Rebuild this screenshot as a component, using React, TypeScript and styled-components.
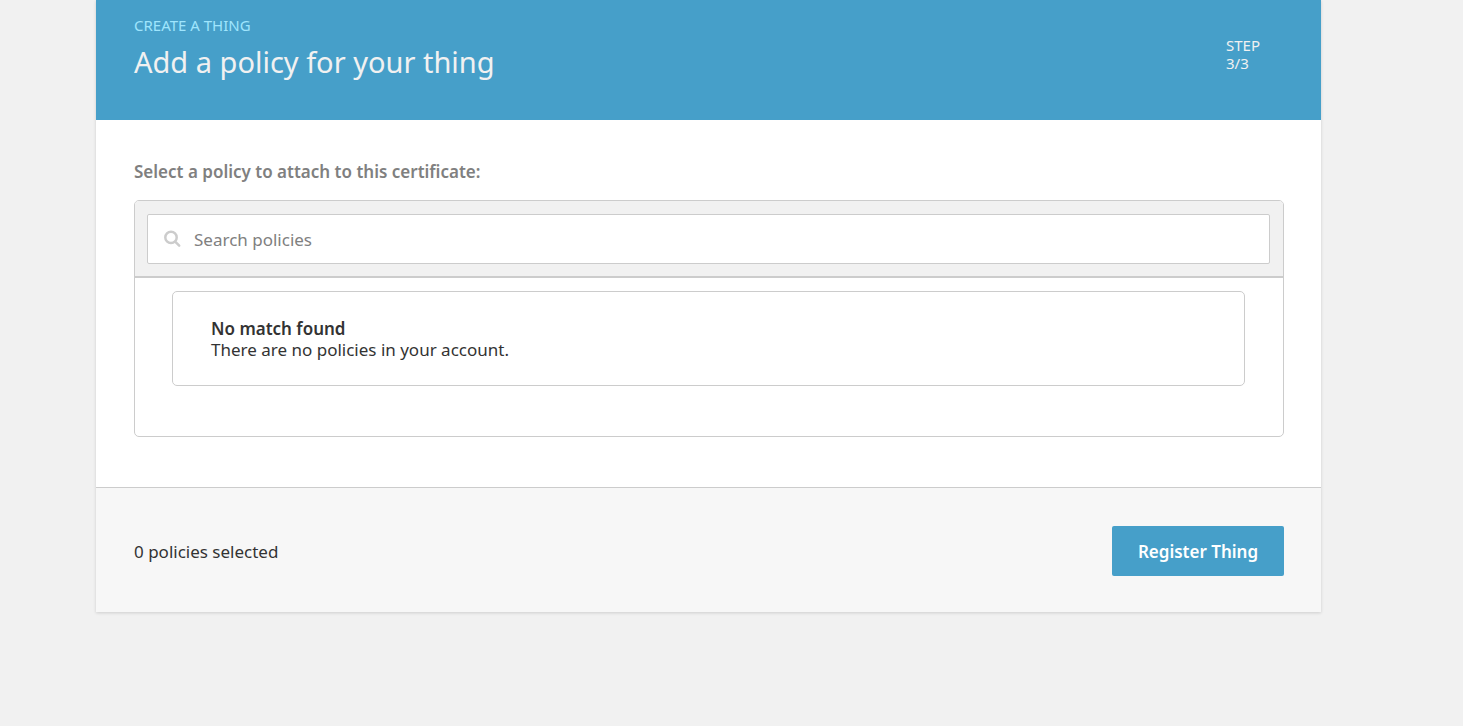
import React, { useState } from "react";
import styled, { createGlobalStyle } from "styled-components";

const GlobalStyle = createGlobalStyle`
  *, *::before, *::after { box-sizing: border-box; }
  body {
    margin: 0;
    background: #f1f1f1;
    color: #333;
    font-family: "Noto Sans", sans-serif;
    font-size: 17px;
    line-height: 21px;
  }
`;

const Page = styled.div`
  padding: 0 142px 114px 96px;
`;

const Card = styled.main`
  background: #fff;
  box-shadow: 0 1px 3px rgba(0, 0, 0, 0.15);
`;

const Header = styled.header`
  display: flex;
  justify-content: space-between;
  padding: 16px 60px 38px 38px;
  background: #469fc9;
  color: #f1f1f1;
`;

const Eyebrow = styled.p`
  margin: 0;
  color: #9fe5fd;
  font-size: 15px;
  line-height: 18px;
  text-transform: uppercase;
`;

const Title = styled.h1`
  margin: 8px 0 0;
  font-size: 29px;
  font-weight: 400;
  line-height: 40px;
`;

const Step = styled.div`
  width: 35px;
  padding-top: 20px;
  font-size: 15px;
  line-height: 18px;
`;

const Body = styled.section`
  padding: 41px 37px 50px 38px;
`;

const Label = styled.label`
  display: block;
  margin-bottom: 17px;
  color: #808080;
  font-weight: 600;
  line-height: 22px;
`;

const Panel = styled.div`
  overflow: hidden;
  border: 1px solid #ccc;
  border-radius: 5px;
`;

const Toolbar = styled.div`
  padding: 13px 13px 12px 12px;
  border-bottom: 2px solid #ccc;
  background: #f1f1f1;
`;

const SearchBox = styled.div`
  display: flex;
  align-items: center;
  gap: 12px;
  height: 50px;
  padding: 0 16px;
  border: 1px solid #ccc;
  border-radius: 2px;
  background: #fff;
`;

const SearchInput = styled.input`
  flex: 1;
  min-width: 0;
  padding: 0;
  border: 0;
  outline: 0;
  background: transparent;
  color: #333;
  font: inherit;

  &::placeholder {
    color: #808080;
    opacity: 1;
  }
`;

const Results = styled.div`
  padding: 13px 38px 50px 37px;
`;

const Notice = styled.div`
  padding: 26px 38px 25px;
  border: 1px solid #ccc;
  border-radius: 5px;
`;

const NoticeText = styled.p<{ $strong?: boolean }>`
  margin: 0;
  font-weight: ${(p) => (p.$strong ? 600 : 400)};
`;

const Footer = styled.footer`
  display: flex;
  align-items: center;
  justify-content: space-between;
  padding: 38px 37px 36px 38px;
  border-top: 1px solid #ccc;
  background: #f7f7f7;
`;

const PrimaryButton = styled.button`
  height: 50px;
  min-width: 172px;
  padding: 0 24px;
  border: 0;
  border-radius: 2px;
  background: #469fc9;
  color: #fff;
  font: inherit;
  font-weight: 600;
  cursor: pointer;
`;

function SearchIcon() {
  return (
    <svg width="18" height="18" viewBox="0 0 18 18" fill="none" stroke="#ccc" aria-hidden="true">
      <circle cx="7" cy="7.4" r="5.7" strokeWidth="2.5" />
      <path d="M11.4 11.8 L15.2 15.6" strokeWidth="2.5" strokeLinecap="round" />
    </svg>
  );
}

export default function App() {
  const [query, setQuery] = useState("");

  return (
    <>
      <GlobalStyle />
      <Page>
        <Card>
          <Header>
            <div>
              <Eyebrow>Create a thing</Eyebrow>
              <Title>Add a policy for your thing</Title>
            </div>
            <Step>
              STEP
              <br />
              3/3
            </Step>
          </Header>
          <Body>
            <Label htmlFor="policy-search">Select a policy to attach to this certificate:</Label>
            <Panel>
              <Toolbar>
                <SearchBox>
                  <SearchIcon />
                  <SearchInput
                    id="policy-search"
                    type="text"
                    placeholder="Search policies"
                    value={query}
                    onChange={(e) => setQuery(e.target.value)}
                  />
                </SearchBox>
              </Toolbar>
              <Results>
                <Notice>
                  <NoticeText $strong>No match found</NoticeText>
                  <NoticeText>There are no policies in your account.</NoticeText>
                </Notice>
              </Results>
            </Panel>
          </Body>
          <Footer>
            <span>0 policies selected</span>
            <PrimaryButton type="button">Register Thing</PrimaryButton>
          </Footer>
        </Card>
      </Page>
    </>
  );
}
